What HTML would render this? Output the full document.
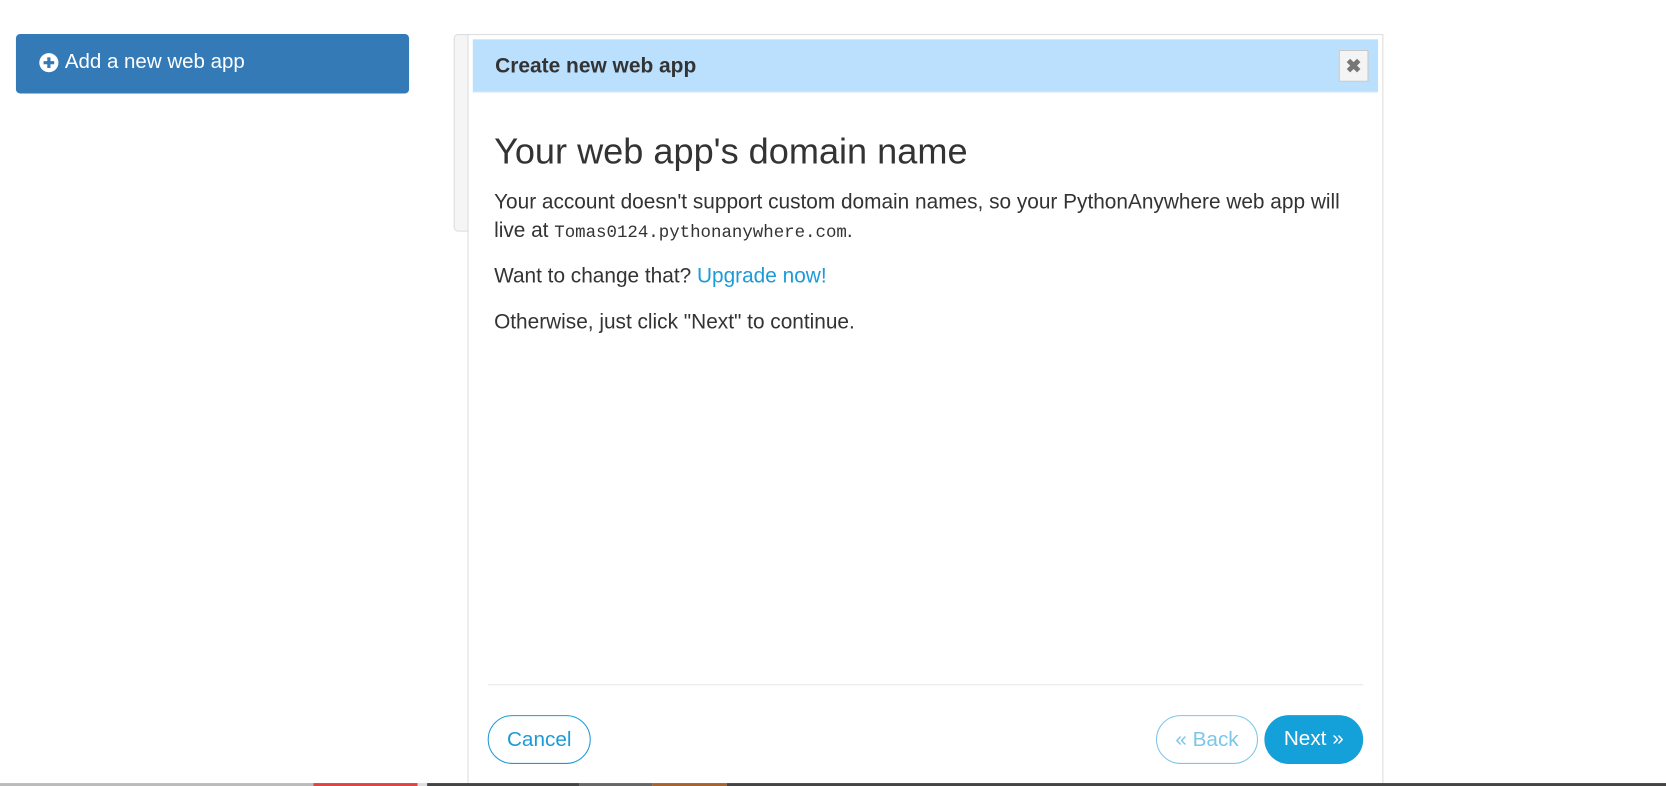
<!DOCTYPE html>
<html><head><style>
body{margin:0;width:1666px;height:786px;position:relative;overflow:hidden;background:#fff;font-family:"Liberation Sans",Arial,sans-serif;color:#333}
#w{position:absolute;left:0;top:0;width:1568px;height:740px;overflow:hidden;transform:scale(1.0625);transform-origin:0 0}
.addbtn{position:absolute;left:15px;top:32px;width:370px;height:56px;background:#337ab7;border-radius:4px;color:#fff;font-size:19.3px}
.addbtn span{position:absolute;top:16px}
.addbtn .ic{position:absolute;left:22px;top:18px;width:18px;height:18px;border-radius:50%;background:#fff}
.bgpanel{position:absolute;left:427px;top:32px;width:40px;height:184px;border:1px solid #ddd;border-radius:4px;background:#f5f5f5}
.modal{position:absolute;left:440px;top:32px;width:860px;height:720px;border:1px solid #ddd;background:#fff}
.hdr{position:absolute;left:4px;top:4px;width:852px;height:49px;background:#bbe0fd;border-bottom:1px solid #d5e6f3}
.hdr b{position:absolute;left:21px;top:14px;font-size:19.7px;color:#333}
.close{position:absolute;left:815px;top:10px;width:26px;height:28px;border:1px solid #c8c8c8;background:#f4f4f4;color:#777;font-size:18px;font-weight:bold;text-align:center;line-height:28px}
h1{position:absolute;left:24px;top:91px;margin:0;font-weight:normal;font-size:34px;color:#333}
p{position:absolute;left:24px;margin:0;font-size:19.6px;line-height:27px;width:820px}
code{font-family:"Liberation Mono",monospace;font-size:16.4px}
a{color:#1c9bd8;text-decoration:none}
.hr{position:absolute;left:18px;top:611px;width:824px;height:1px;background:#e8e8e8}
.btn{position:absolute;top:640px;height:46px;border-radius:23px;font-size:19.5px;text-align:center;line-height:45px;box-sizing:border-box}
.strip{position:absolute;top:737px;height:3px;z-index:5}
</style></head><body><div id="w">
<div class="addbtn"><div class="ic"><svg width="18" height="18" viewBox="0 0 18 18"><path d="M9 4v10M4 9h10" stroke="#337ab7" stroke-width="3"/></svg></div><span style="left:46px">Add a new web app</span></div>
<div class="bgpanel"></div>
<div class="modal">
<div class="hdr"><b>Create new web app</b><div class="close">✖</div></div>
<h1>Your web app's domain name</h1>
<p style="top:144px">Your account doesn't support custom domain names, so your PythonAnywhere web app will live at <code>Tomas0124.pythonanywhere.com</code>.</p>
<p style="top:214px">Want to change that? <a>Upgrade now!</a></p>
<p style="top:257px">Otherwise, just click "Next" to continue.</p>
<div class="hr"></div>
<div class="btn" style="left:18px;width:97px;border:1px solid #1c9bd8;color:#1c9bd8">Cancel</div>
<div class="btn" style="left:647px;width:96px;border:1px solid #7cc6ea;color:#7cc6ea">« Back</div>
<div class="btn" style="left:749px;width:93px;background:#14a0d9;color:#fff">Next »</div>
</div>
<div class="strip" style="left:0;width:295px;background:#bbb"></div>
<div class="strip" style="left:295px;width:98px;background:#d44"></div>
<div class="strip" style="left:393px;width:9px;background:#ddd"></div>
<div class="strip" style="left:402px;width:143px;background:#444"></div>
<div class="strip" style="left:545px;width:69px;background:#666"></div>
<div class="strip" style="left:614px;width:70px;background:#a66330"></div>
<div class="strip" style="left:684px;width:884px;background:#444"></div>
</div></body></html>
